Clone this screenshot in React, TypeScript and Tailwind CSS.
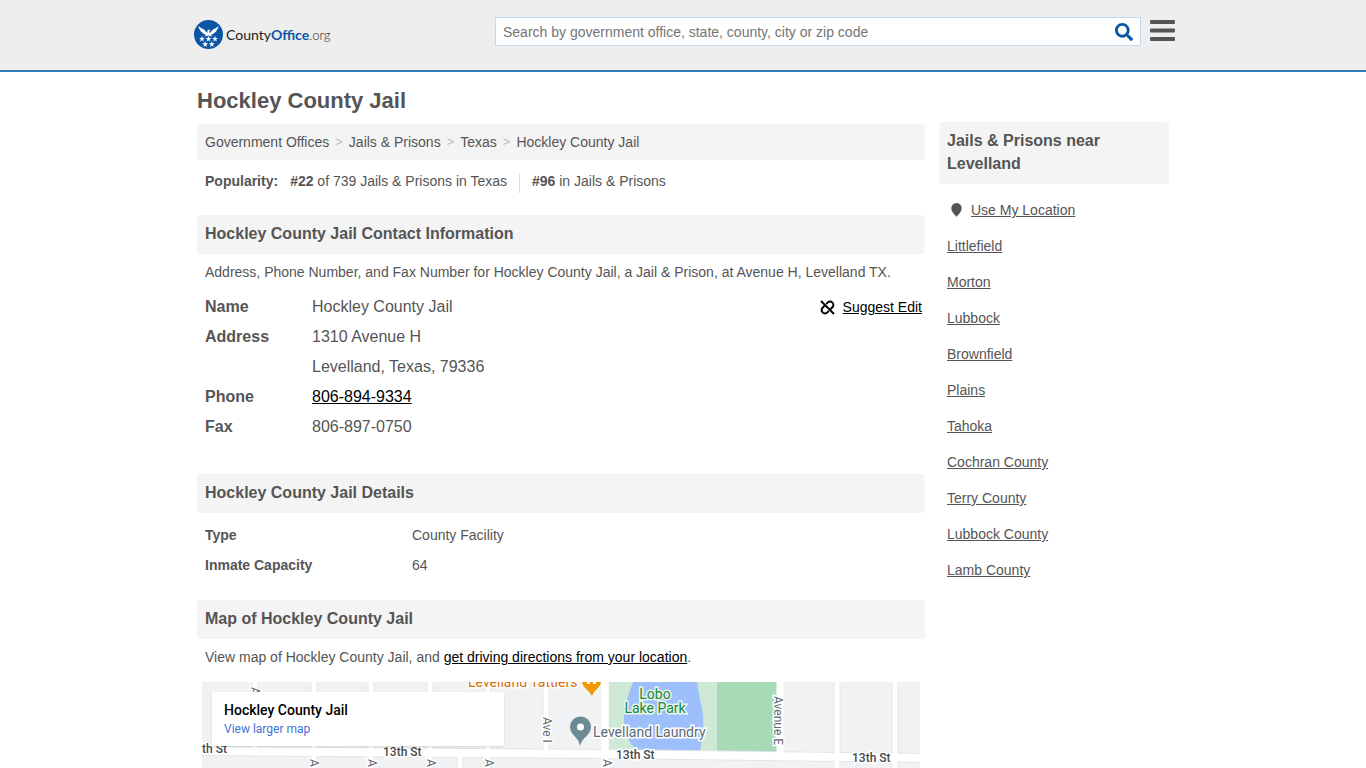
import React from "react";
import { FaSearch } from "react-icons/fa";

const nearby = [
    "Littlefield",
    "Morton",
    "Lubbock",
    "Brownfield",
    "Plains",
    "Tahoka",
    "Cochran County",
    "Terry County",
    "Lubbock County",
    "Lamb County",
];

function Star({ x, y }: { x: number; y: number }) {
    return (
        <path
            transform={`translate(${x} ${y})`}
            d="M0 -3 L0.8 -0.9 L3 -0.9 L1.2 0.5 L1.9 2.7 L0 1.4 L-1.9 2.7 L-1.2 0.5 L-3 -0.9 L-0.8 -0.9 Z"
            fill="#fff"
        />
    );
}

function Logo() {
    return (
        <a href="#" className="flex items-center gap-[3px]" aria-label="CountyOffice.org">
            <svg width="29" height="29" viewBox="0 0 29 29">
                <circle cx="14.5" cy="14.5" r="14.5" fill="#0b56a4" />
                <path
                    d="M4.500 6 C6 8 9 8.500 10.500 10 C11.500 11 12.500 12.500 13.500 13 C13 11.500 13.300 9.800 14.800 9.600 L16.400 10.600 L15.300 11.200 C15.300 12 15.300 12.500 15.600 13 C17 12.300 17.500 11 18.500 10 C20 8.500 23 8 24.500 6 C24.500 8 23.800 9.200 22.800 10 C22.500 11.300 21.500 12.200 20.500 12.700 C19.500 14 18.200 14.500 17 14.700 L18.200 16.400 L14.500 15.600 L10.800 16.400 L12 14.700 C10.800 14.500 9.500 14 8.500 12.700 C7.500 12.200 6.500 11.300 6.200 10 C5.200 9.200 4.500 8 4.500 6 Z"
                    fill="#fff"
                />
                <Star x={8} y={18.8} />
                <Star x={14.5} y={18.8} />
                <Star x={21} y={18.8} />
                <Star x={11.2} y={24.2} />
                <Star x={17.8} y={24.2} />
            </svg>
            <span className="font-[Lato,sans-serif] text-[14px] leading-5 text-[#222]">
                County<b className="text-[#0b56a4]">Office</b>
                <span className="text-[13px] font-light">.org</span>
            </span>
        </a>
    );
}

function Header() {
    return (
        <header className="border-b-2 border-[#337ab7] bg-[#eeeeee]">
            <div className="mx-auto flex h-[70px] max-w-[984px] items-start pl-[3px]">
                <div className="w-[301px] shrink-0 pt-5">
                    <Logo />
                </div>
                <form className="mt-[17px] flex h-[29px] flex-1 items-center border border-[#c5d9e8] bg-white">
                    <input
                        type="text"
                        aria-label="Search"
                        placeholder="Search by government office, state, county, city or zip code"
                        className="h-full min-w-0 flex-1 px-[7px] text-[14px] outline-none placeholder:text-[#757575]"
                    />
                    <button type="button" aria-label="Submit search" className="px-[7px] text-[#0b56a4]">
                        <FaSearch size={18} />
                    </button>
                </form>
                <button type="button" aria-label="Menu" className="mt-5 ml-[9px]">
                    <svg width="25" height="21" viewBox="0 0 25 21" fill="#555">
                        <rect width="25" height="4" rx="1" />
                        <rect y="8.500" width="25" height="4" rx="1" />
                        <rect y="17" width="25" height="4" rx="1" />
                    </svg>
                </button>
            </div>
        </header>
    );
}

function SectionTitle({ children }: { children: React.ReactNode }) {
    return <h2 className="rounded bg-[#f4f4f4] px-2 pt-[7px] pb-[9px] text-[16px] leading-[23px] font-bold">{children}</h2>;
}

function Breadcrumb() {
    return (
        <nav className="flex h-9 items-center gap-[6px] rounded bg-[#f4f4f4] px-2 text-[14px]">
            <a href="#">Government Offices</a>
            <span className="text-[13px] text-[#bbb]">&gt;</span>
            <a href="#">Jails &amp; Prisons</a>
            <span className="text-[13px] text-[#bbb]">&gt;</span>
            <a href="#">Texas</a>
            <span className="text-[13px] text-[#bbb]">&gt;</span>
            <span>Hockley County Jail</span>
        </nav>
    );
}

function Contact() {
    return (
        <div className="flex items-start justify-between pr-[3px] pl-2">
            <table className="text-left text-[16px] leading-[30px]">
                <tbody>
                    <tr>
                        <th className="w-[107px]">Name</th>
                        <td>Hockley County Jail</td>
                    </tr>
                    <tr>
                        <th className="align-top">Address</th>
                        <td>
                            1310 Avenue H<br />
                            Levelland, Texas, 79336
                        </td>
                    </tr>
                    <tr>
                        <th>Phone</th>
                        <td>
                            <a href="#" className="text-black underline">806-894-9334</a>
                        </td>
                    </tr>
                    <tr>
                        <th>Fax</th>
                        <td>806-897-0750</td>
                    </tr>
                </tbody>
            </table>
            <a href="#" className="flex items-center gap-2 text-[14px] leading-[30px] text-black">
                <svg width="15" height="15" viewBox="0 0 15 15" fill="none" stroke="#000" strokeWidth="2">
                    <path d="M1 1 L14 14" />
                    <path d="M6.200 4 L7.600 2.600 A3.300 3.300 0 0 1 12.400 2.600 A3.300 3.300 0 0 1 12.400 7.300 L10.300 9.400" />
                    <path d="M8.800 11 L7.400 12.400 A3.300 3.300 0 0 1 2.600 12.400 A3.300 3.300 0 0 1 2.600 7.700 L4.700 5.600" />
                </svg>
                <span className="underline">Suggest Edit</span>
            </a>
        </div>
    );
}

function MapView() {
    return (
        <div className="relative mx-[5px] h-[86px] overflow-hidden bg-[#f1f2f4]">
            <svg
                className="h-full w-full font-[Roboto,sans-serif]"
                viewBox="0 0 718 86"
                preserveAspectRatio="xMidYMid slice"
            >
                <rect width="718" height="86" fill="#f1f2f4" />
                <path d="M407 0 H516 V70 H407 Z" fill="#ceead6" />
                <path d="M515 0 H575 V71 H515 Z" fill="#a8dab5" />
                <path d="M431 0 C427 12 421 26 422 40 C424 54 428 66 440 69 L498 69 C502 52 503 32 498 18 L495 0 Z" fill="#9dbffb" />
                <g stroke="#fff" fill="none">
                    <path d="M0 69 L400 72 L718 76" stroke="#e3e5e8" strokeWidth="10" />
                    <path
                        d="M53 0 V69 M112 0 V86 M169 0 V86 M228 0 V86 M286 0 V86 M344 0 V72 M258 72 V86 M635 0 V86 M693 0 V86"
                        stroke="#e3e5e8"
                        strokeWidth="7"
                    />
                    <path d="M0 69 L400 72 L718 76" strokeWidth="8" />
                    <path
                        d="M53 0 V69 M112 0 V86 M169 0 V86 M228 0 V86 M286 0 V86 M344 0 V72 M258 72 V86 M635 0 V86 M693 0 V86"
                        strokeWidth="5"
                    />
                    <path d="M403 0 V86 M578 0 V76" strokeWidth="7" />
                </g>
                <g fontSize="12" fill="#45494d" stroke="#fff" strokeWidth="3" paintOrder="stroke" fontWeight="500">
                    <text x="0" y="71">th St</text>
                    <text x="181" y="74">13th St</text>
                    <text x="414" y="77">13th St</text>
                    <text x="650" y="80">13th St</text>
                    <g fontWeight="400" fill="#666a6e">
                        <text transform="translate(341 35) rotate(90)">Ave I</text>
                        <text transform="translate(572 14) rotate(90)">Avenue E</text>
                        <text transform="translate(49 5) rotate(90)">A</text>
                        <text transform="translate(108 77) rotate(90)">A</text>
                        <text transform="translate(166 77) rotate(90)">A</text>
                        <text transform="translate(225 77) rotate(90)">A</text>
                        <text transform="translate(283 77) rotate(90)">A</text>
                        <text transform="translate(401 77) rotate(90)">A</text>
                    </g>
                </g>
                <g fontSize="14" fill="#198639" stroke="#e8f6ec" strokeWidth="3" paintOrder="stroke" textAnchor="middle">
                    <text x="453" y="17">Lobo</text>
                    <text x="453" y="31">Lake Park</text>
                </g>
                <text x="391" y="55" fontSize="14" fill="#5b6b78" stroke="#fff" strokeWidth="3" paintOrder="stroke">
                    Levelland Laundry
                </text>
                <text x="266" y="5" fontSize="14" fill="#d56e0c" stroke="#fff" strokeWidth="3" paintOrder="stroke">
                    Levelland Tattlers
                </text>
                <path d="M380 0 H399 C398 6 392 8 390 14 C387 8 381 6 380 0 Z" fill="#f29900" />
                <path d="M385 0 V2 H388 V0 Z M391 0 V2 H394 V0 Z" fill="#fff" />
                <path d="M378 64 C377 55 368 53 368 45 A10.5 10.5 0 0 1 389 45 C389 53 380 55 378 64 Z" fill="#6b8a96" />
                <circle cx="378.500" cy="45" r="3.500" fill="#fff" />
            </svg>
            <div className="absolute top-[10px] left-[10px] h-[54px] w-[292px] rounded-xs bg-white px-3 pt-2 font-[Roboto,sans-serif] shadow">
                <div className="text-[14px] leading-5 font-medium text-black">Hockley County Jail</div>
                <a href="#" className="block text-[12px] leading-[18px] text-[#4272db]">View larger map</a>
            </div>
        </div>
    );
}

function Sidebar() {
    return (
        <aside className="w-[230px] shrink-0 pt-[50px]">
            <SectionTitle>Jails &amp; Prisons near Levelland</SectionTitle>
            <ul className="mt-2 px-2 text-[14px] leading-9">
                <li className="flex items-center gap-[9px] pl-1">
                    <svg width="11" height="14" viewBox="0 0 11 14" fill="#555">
                        <path d="M5.500 14 C4 11.500 0.300 9 0.300 5.200 A5.200 5.200 0 0 1 10.700 5.200 C10.700 9 7 11.500 5.500 14 Z" />
                    </svg>
                    <a href="#" className="underline">Use My Location</a>
                </li>
                {nearby.map((place) => (
                    <li key={place}>
                        <a href="#" className="underline">{place}</a>
                    </li>
                ))}
            </ul>
        </aside>
    );
}

export default function App() {
    return (
        <div className="bg-white font-['Liberation_Sans',Arial,sans-serif] text-[#555]">
            <Header />
            <div className="mx-auto flex max-w-[972px] items-start gap-[14px]">
                <main className="min-w-0 flex-1">
                    <h1 className="pt-[14px] pb-2 text-[22px] leading-[30px] font-bold">Hockley County Jail</h1>
                    <Breadcrumb />
                    <div className="mt-[13px] flex h-5 items-start px-2 text-[14px] leading-4">
                        <b className="mr-3">Popularity:</b>
                        <span className="mr-3 h-5 border-r border-[#ddd] pr-3">
                            <b>#22</b> of 739 Jails &amp; Prisons in Texas
                        </span>
                        <span>
                            <b>#96</b> in Jails &amp; Prisons
                        </span>
                    </div>
                    <section className="mt-[22px]">
                        <SectionTitle>Hockley County Jail Contact Information</SectionTitle>
                        <p className="px-2 pt-2 pb-[10px] text-[14px] leading-5">
                            Address, Phone Number, and Fax Number for Hockley County Jail, a Jail &amp; Prison, at Avenue H, Levelland TX.
                        </p>
                        <Contact />
                    </section>
                    <section className="mt-8">
                        <SectionTitle>Hockley County Jail Details</SectionTitle>
                        <table className="mt-[7px] ml-2 text-left text-[14px] leading-[30px]">
                            <tbody>
                                <tr>
                                    <th className="w-[207px]">Type</th>
                                    <td>County Facility</td>
                                </tr>
                                <tr>
                                    <th>Inmate Capacity</th>
                                    <td>64</td>
                                </tr>
                            </tbody>
                        </table>
                    </section>
                    <section className="mt-5">
                        <SectionTitle>Map of Hockley County Jail</SectionTitle>
                        <p className="px-2 pt-2 pb-[15px] text-[14px] leading-5">
                            View map of Hockley County Jail, and{" "}
                            <a href="#" className="text-black underline">get driving directions from your location</a>.
                        </p>
                        <MapView />
                    </section>
                </main>
                <Sidebar />
            </div>
        </div>
    );
}
